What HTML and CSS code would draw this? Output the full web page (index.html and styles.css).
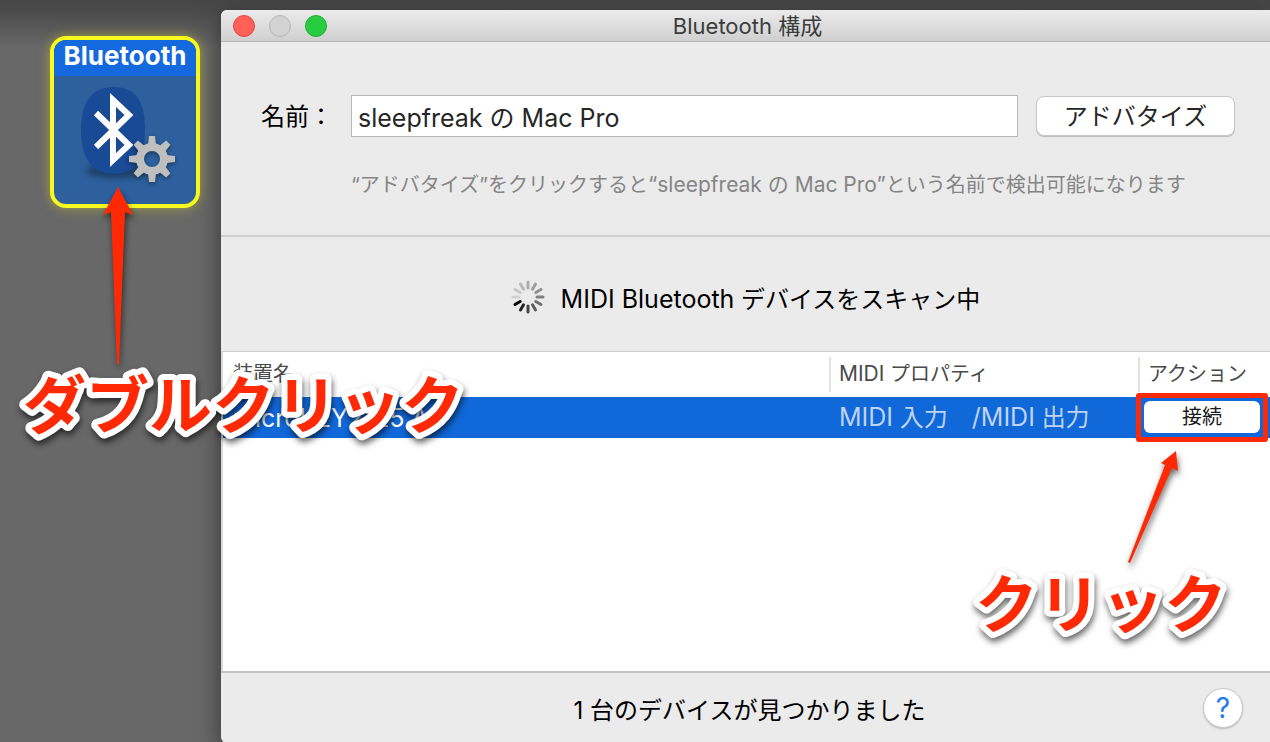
FILE: index.html
```
<!DOCTYPE html>
<html lang="ja">
<head>
<meta charset="UTF-8">
<meta name="viewport" content="width=device-width, initial-scale=1.0">
<title>Bluetooth 構成</title>
<link rel="stylesheet" href="styles.css">
</head>
<body>

<div class="desktop">

  <!-- Studio icon -->
  <div class="studio">
    <div class="device">
      <div class="device-name">Bluetooth</div>
      <svg class="device-icon" viewBox="0 0 142 126" aria-hidden="true">
        <ellipse class="icon-shadow" cx="62" cy="94" rx="30" ry="7"/>
        <path d="M60 10C83 10 91 26 91 53S83 97 60 97 27 80 27 53 37 10 60 10Z" fill="#194a95"/>
        <path d="M42 36L75 68 59 83V23L75 38 42 70" fill="none" stroke="#fff" stroke-width="6"/>
        <g class="gear" transform="translate(98 82)">
          <circle r="12" fill="none" stroke="#bfbfbf" stroke-width="8"/>
          <g fill="#bfbfbf">
            <path id="tooth" d="M-4-14L-3-23H3L4-14Z"/>
            <use href="#tooth" transform="rotate(45)"/>
            <use href="#tooth" transform="rotate(90)"/>
            <use href="#tooth" transform="rotate(135)"/>
            <use href="#tooth" transform="rotate(180)"/>
            <use href="#tooth" transform="rotate(225)"/>
            <use href="#tooth" transform="rotate(270)"/>
            <use href="#tooth" transform="rotate(315)"/>
          </g>
        </g>
      </svg>
    </div>
  </div>

  <!-- Bluetooth window -->
  <main class="window">
    <header class="titlebar">
      <div class="lights">
        <button class="light close" aria-label="閉じる"></button>
        <button class="light minimize" aria-label="しまう" disabled></button>
        <button class="light zoom" aria-label="拡大"></button>
      </div>
      <h1>Bluetooth 構成</h1>
    </header>

    <section class="name-panel">
      <label for="name">名前：</label>
      <input id="name" type="text" value="sleepfreak の Mac Pro">
      <button class="advertise">アドバタイズ</button>
      <p class="hint">“アドバタイズ”をクリックすると<span class="latin-small">“sleepfreak の Mac Pro”</span>という名前で検出可能になります</p>
    </section>

    <section class="scan">
      <svg class="spinner" viewBox="-17 -17 34 34" aria-hidden="true">
        <g stroke-width="3" stroke-linecap="round" stroke="#000">
          <path d="M0-9V-15" opacity=".26"/>
          <path d="M0-9V-15" opacity=".32" transform="rotate(30)"/>
          <path d="M0-9V-15" opacity=".38" transform="rotate(60)"/>
          <path d="M0-9V-15" opacity=".45" transform="rotate(90)"/>
          <path d="M0-9V-15" opacity=".52" transform="rotate(120)"/>
          <path d="M0-9V-15" opacity=".6" transform="rotate(150)"/>
          <path d="M0-9V-15" opacity=".7" transform="rotate(180)"/>
          <path d="M0-9V-15" opacity=".85" transform="rotate(210)"/>
          <path d="M0-9V-15" transform="rotate(240)"/>
          <path d="M0-9V-15" opacity=".1" transform="rotate(270)"/>
          <path d="M0-9V-15" opacity=".16" transform="rotate(300)"/>
          <path d="M0-9V-15" opacity=".21" transform="rotate(330)"/>
        </g>
      </svg>
      <p><span class="latin">MIDI Bluetooth</span> デバイスをスキャン中</p>
    </section>

    <section class="devices">
      <table>
        <thead>
          <tr>
            <th class="col-name"><div>装置名</div></th>
            <th class="col-midi"><div><span class="latin-small">MIDI</span> プロパティ</div></th>
            <th class="col-action"><div>アクション</div></th>
          </tr>
        </thead>
        <tbody>
          <tr class="selected">
            <td class="latin">microKEY2-25 Air</td>
            <td class="midi"><span class="latin">MIDI</span> 入力　<span class="latin">/MIDI</span> 出力</td>
            <td class="action"><button class="connect">接続</button></td>
          </tr>
        </tbody>
      </table>
    </section>

    <footer class="status">
      <p>1 台のデバイスが見つかりました</p>
      <button class="help" aria-label="ヘルプ">?</button>
    </footer>
  </main>

  <!-- Callouts -->
  <svg class="callout callout-double" viewBox="0 0 470 280" role="img" aria-label="ダブルクリック">
    <path d="M118 7L133 35 125 32 119 184H117L111 32 103 35Z"/>
    <text x="23" y="248">ダブルクリック</text>
  </svg>
  <svg class="callout callout-click" viewBox="0 0 300 210" role="img" aria-label="クリック">
    <path d="M206 11L208 31 202 28 160 123 158 122 195 25 191 23Z"/>
    <text x="5" y="187">クリック</text>
  </svg>

</div>

</body>
</html>
```
FILE: styles.css
```
* {
  box-sizing: border-box;
}

body {
  margin: 0;
  font-family: Inter, "Noto Sans CJK JP", sans-serif;
  font-size: 24px;
  color: #000;
}

h1,
p {
  margin: 0;
}

button,
input {
  font: inherit;
  padding: 0;
}

/* Latin runs are set a little larger than the kana around them */
.latin {
  font-size: 25px;
}

.latin-small {
  font-size: 21px;
}

.desktop {
  position: relative;
  display: flex;
  min-height: 100vh;
  padding-top: 10px;
  overflow: hidden;
  background: linear-gradient(180deg, #464646 0, #4a4a4a 10px, #686868 48px);
}

/* Studio icon */
.studio {
  flex: none;
  width: 221px;
  padding: 26px 0 0 50px;
}

.device {
  width: 150px;
  border: 4px solid #f8fa1e;
  border-radius: 16px;
  overflow: hidden;
  background: #2d609d;
  box-shadow: 0 0 12px rgba(220, 220, 40, 0.5);
}

.device-name {
  height: 36px;
  background: #1469df;
  color: #fff;
  font-weight: 700;
  font-size: 26px;
  line-height: 32px;
  text-align: center;
}

.device-icon {
  display: block;
  width: 100%;
  height: 128px;
}

.icon-shadow {
  fill: rgba(0, 0, 0, 0.35);
  filter: blur(3px);
}

.gear {
  filter: drop-shadow(0 2px 2px rgba(0, 0, 0, 0.4));
}

/* Window */
.window {
  flex: 1;
  min-width: 0;
  display: flex;
  flex-direction: column;
  border-radius: 6px 0 0 6px;
  overflow: hidden;
  background: #ebebeb;
  box-shadow: 0 8px 24px rgba(0, 0, 0, 0.5);
}

.titlebar {
  position: relative;
  flex: none;
  height: 32px;
  border-bottom: 1px solid #b2b2b2;
  background: linear-gradient(180deg, #ebebeb, #d0d0d0);
}

.titlebar h1 {
  padding-left: 4px;
  font-size: 22px;
  font-weight: 400;
  line-height: 32px;
  text-align: center;
  color: #3c3c3c;
}

.lights {
  position: absolute;
  top: 5px;
  left: 12px;
  display: flex;
  gap: 14px;
}

.light {
  width: 22px;
  height: 22px;
  border: 1px solid #e2463f;
  border-radius: 50%;
  background: #ff6058;
}

.light.minimize {
  border-color: #b8b8b8;
  background: #d2d2d2;
}

.light.zoom {
  border-color: #1dad2b;
  background: #29cc41;
}

.name-panel {
  flex: none;
  display: grid;
  grid-template-columns: 72px 1fr 199px;
  column-gap: 18px;
  align-items: center;
  align-content: start;
  height: 195px;
  padding: 53px 35px 0 40px;
  border-bottom: 2px solid #cfcfcf;
}

.name-panel label {
  padding-bottom: 4px;
}

.name-panel input {
  width: 100%;
  height: 42px;
  padding: 0 6px;
  border: 1px solid #b9b9b9;
  border-radius: 0;
  background: #fff;
  color: #262626;
  font-size: 25px;
}

.advertise {
  height: 40px;
  padding-bottom: 4px;
  border: 1px solid #c6c6c6;
  border-radius: 8px;
  background: #fff;
  color: #262626;
  box-shadow: 0 1px 1px rgba(0, 0, 0, 0.2);
}

.hint {
  grid-column: 2 / 4;
  margin-top: 32px;
  font-size: 20px;
  line-height: 32px;
  white-space: nowrap;
  color: #858585;
}

.scan {
  flex: none;
  display: flex;
  align-items: center;
  justify-content: center;
  gap: 16px;
  height: 114px;
  padding-top: 6px;
}

.spinner {
  width: 34px;
  height: 34px;
}

/* Device list */
.devices {
  flex: 1;
  min-height: 320px;
  border-top: 1px solid #cfcfcf;
  border-left: 2px solid #d8d8d8;
  background: #fff;
}

table {
  width: 100%;
  table-layout: fixed;
  border-collapse: collapse;
}

th {
  height: 45px;
  padding: 0;
  font-size: 20px;
  font-weight: 400;
  text-align: left;
  color: #4a4a4a;
}

th div {
  height: 35px;
  padding-left: 8px;
  border-left: 2px solid #e2e2e2;
  line-height: 34px;
}

.col-name div {
  border-left-color: transparent;
}

.col-midi {
  width: 309px;
}

.col-action {
  width: 132px;
}

td {
  height: 40px;
  padding: 0 0 0 10px;
  line-height: 40px;
  white-space: nowrap;
}

.selected {
  background: #1068d9;
  color: #fff;
}

.selected .midi {
  color: #bfd3f3;
}

.action {
  position: relative;
  padding: 0 10px 2px 6px;
}

/* Red frame round the button */
.action::after {
  content: "";
  position: absolute;
  inset: -4px 2px -4px -2px;
  border: 5px solid #fb2a08;
  border-radius: 3px;
  pointer-events: none;
}

.connect {
  display: block;
  width: 100%;
  height: 32px;
  border: 0;
  border-radius: 6px;
  background: #fff;
  color: #1a1a1a;
  font-size: 20px;
  line-height: 32px;
}

/* Status bar */
.status {
  position: relative;
  flex: none;
  height: 72px;
  padding-left: 8px;
  border-top: 2px solid #c4c4c4;
  line-height: 76px;
  text-align: center;
}

.help {
  position: absolute;
  top: 15px;
  right: 27px;
  width: 40px;
  height: 40px;
  border: 1px solid #c9c9c9;
  border-radius: 50%;
  background: #fff;
  color: #1f7cf2;
  font-size: 28px;
  line-height: 38px;
  box-shadow: 0 1px 2px rgba(0, 0, 0, 0.2);
}

/* Callouts */
.callout {
  position: absolute;
  fill: #ff2a05;
  pointer-events: none;
  filter: drop-shadow(1px 4px 3px rgba(0, 0, 0, 0.6));
}

.callout text {
  font-family: "Noto Sans CJK JP", sans-serif;
  font-size: 63px;
  font-weight: 700;
  stroke: #fff;
  stroke-width: 12px;
  stroke-linejoin: round;
  paint-order: stroke;
}

.callout-double {
  top: 180px;
  left: 0;
  width: 470px;
  height: 280px;
}

.callout-click {
  top: 440px;
  right: 0;
  width: 300px;
  height: 210px;
}
```
